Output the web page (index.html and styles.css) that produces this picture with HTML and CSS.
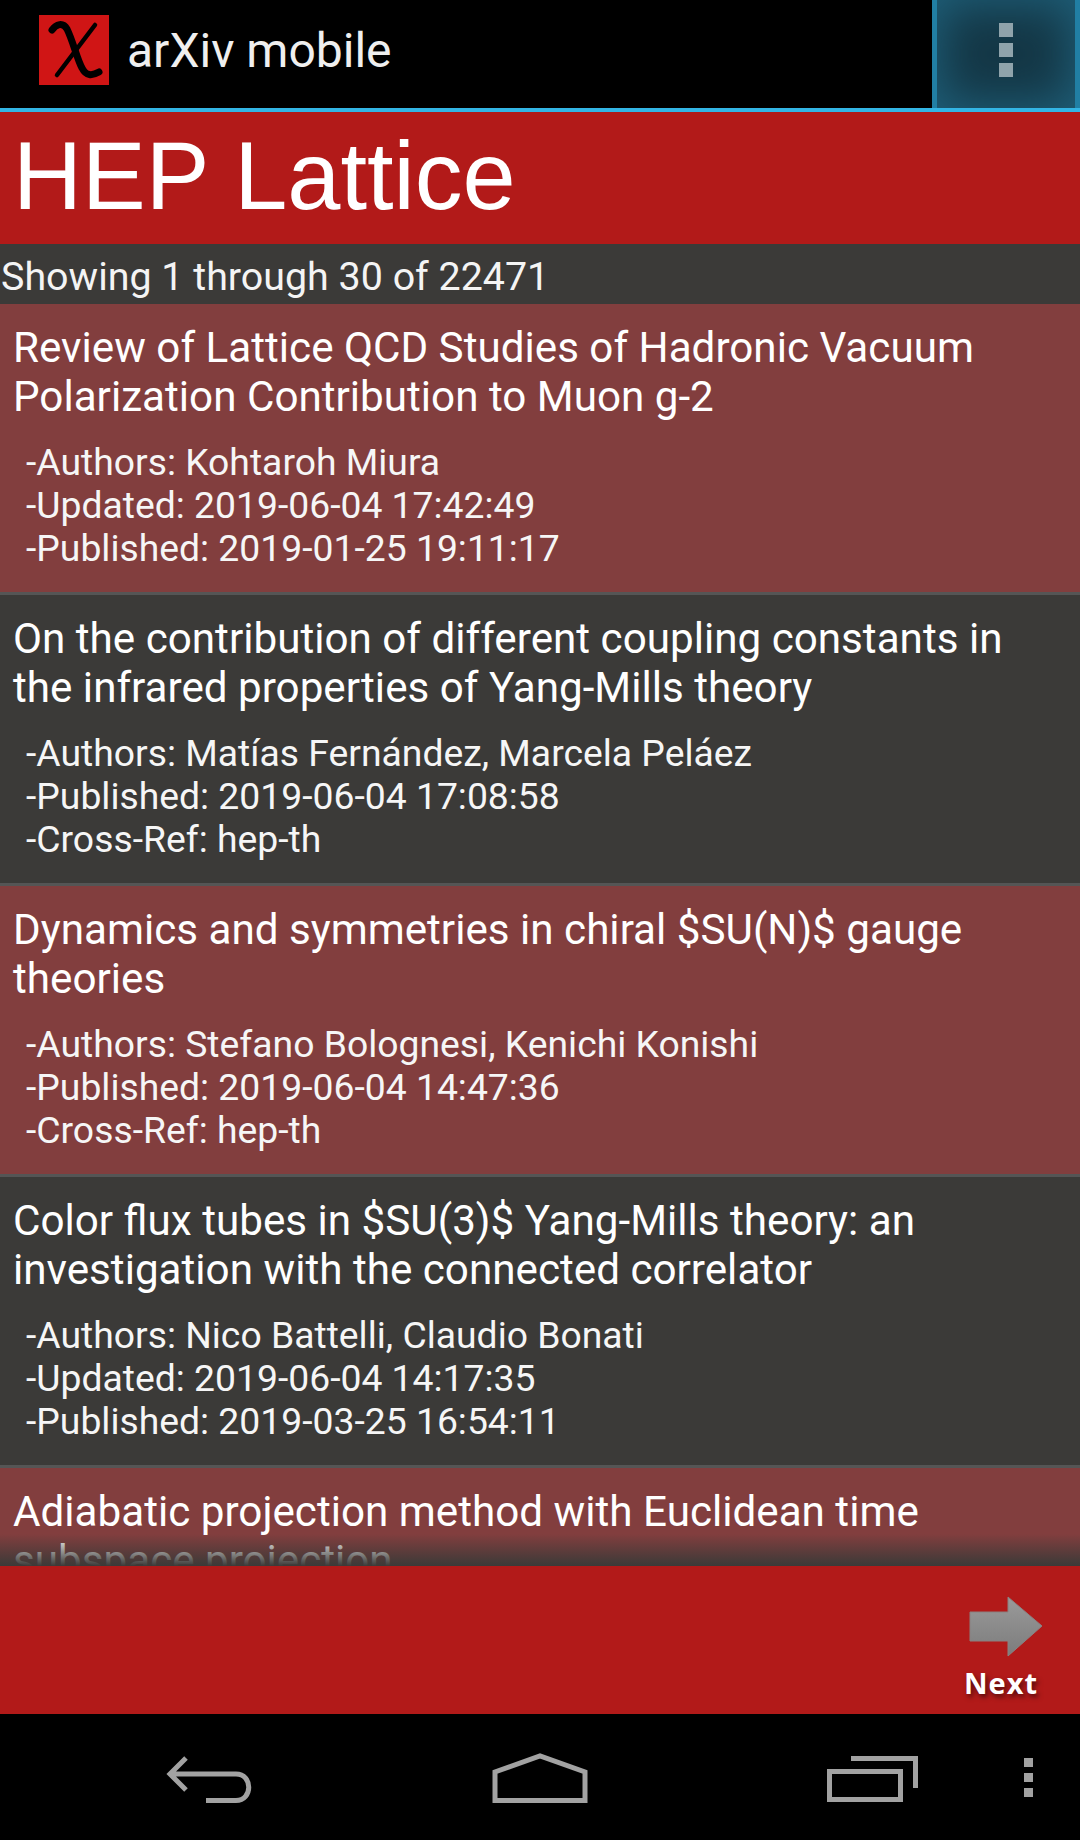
FILE: index.html
```html
<!DOCTYPE html>
<html lang="en">
<head>
<meta charset="utf-8">
<title>arXiv mobile</title>
<link rel="stylesheet" href="styles.css">
</head>
<body>
<div class="app">
  <header class="actionbar">
    <div class="brand">
      <svg class="logo" viewBox="0 0 70 70" aria-hidden="true">
        <rect width="70" height="70" fill="#d01515"/>
        <path class="chi-a" d="M13 15 C17 9 24 7 28 14 C34 26 38 44 43 53 C47 61 53 61 60 57"/>
        <path class="chi-b" d="M56 10 L18 60"/>
      </svg>
      <span class="apptitle">arXiv mobile</span>
    </div>
    <div class="overflow">
      <span class="dot"></span><span class="dot"></span><span class="dot"></span>
    </div>
  </header>
  <h1 class="category">HEP Lattice</h1>
  <div class="count">Showing 1 through 30 of 22471</div>
  <main class="list">
    <article class="item alt">
      <h2 class="item-title">Review of Lattice QCD Studies of Hadronic Vacuum Polarization Contribution to Muon g-2</h2>
      <p class="meta">-Authors: Kohtaroh Miura<br>-Updated: 2019-06-04 17:42:49<br>-Published: 2019-01-25 19:11:17</p>
    </article>
    <article class="item">
      <h2 class="item-title">On the contribution of different coupling constants in the infrared properties of Yang-Mills theory</h2>
      <p class="meta">-Authors: Matías Fernández, Marcela Peláez<br>-Published: 2019-06-04 17:08:58<br>-Cross-Ref: hep-th</p>
    </article>
    <article class="item alt">
      <h2 class="item-title">Dynamics and symmetries in chiral $SU(N)$ gauge theories</h2>
      <p class="meta">-Authors: Stefano Bolognesi, Kenichi Konishi<br>-Published: 2019-06-04 14:47:36<br>-Cross-Ref: hep-th</p>
    </article>
    <article class="item">
      <h2 class="item-title">Color flux tubes in $SU(3)$ Yang-Mills theory: an investigation with the connected correlator</h2>
      <p class="meta">-Authors: Nico Battelli, Claudio Bonati<br>-Updated: 2019-06-04 14:17:35<br>-Published: 2019-03-25 16:54:11</p>
    </article>
    <article class="item alt">
      <h2 class="item-title">Adiabatic projection method with Euclidean time subspace projection</h2>
    </article>
    <div class="fade"></div>
  </main>
  <footer class="pager">
    <div class="next">
      <svg class="next-arrow" viewBox="0 0 74 62" aria-hidden="true">
        <defs>
          <linearGradient id="arrowfill" x1="0" y1="0" x2="0" y2="1">
            <stop offset="0" stop-color="#9a9a9a"/>
            <stop offset="1" stop-color="#7c7c7c"/>
          </linearGradient>
        </defs>
        <path d="M1 16 H39 V1 L73 30 L39 60 V45 H1 Z" fill="url(#arrowfill)" stroke="#8a8080" stroke-width="1"/>
      </svg>
      <span class="next-label">Next</span>
    </div>
  </footer>
  <nav class="navbar">
    <svg class="nav-back" viewBox="0 0 90 48" aria-hidden="true">
      <path d="M20 3 L4 19 L20 35 M5 19 H70 C87 19 87 45.500 70 45.500 H40"/>
    </svg>
    <svg class="nav-home" viewBox="0 0 96 50" aria-hidden="true">
      <path d="M3 47.500 V19 L48 3 L93 19 V47.500 Z"/>
    </svg>
    <svg class="nav-recent" viewBox="0 0 92 46" aria-hidden="true">
      <path d="M24 2.500 H88.500 V32 M2.500 15.500 H73.500 V43.500 H2.500 Z" />
    </svg>
    <div class="nav-menu"><span></span><span></span><span></span></div>
  </nav>
</div>
</body>
</html>
```
FILE: styles.css
```css
* { box-sizing: border-box; }
html, body { margin: 0; padding: 0; background: #000; }
.app { width: 1080px; height: 1840px; display: flex; flex-direction: column; overflow: hidden; font-family: Roboto, "Liberation Sans", sans-serif; color: #fff; }

.actionbar { height: 112px; flex: none; background: #000; border-bottom: 4px solid #33b5e5; display: flex; justify-content: space-between; }
.brand { display: flex; align-items: center; padding-left: 39px; gap: 18px; }
.logo { width: 70px; height: 70px; display: block; margin-top: -8px; }
.chi-a { fill: none; stroke: #000; stroke-width: 7; stroke-linecap: round; }
.chi-b { fill: none; stroke: #000; stroke-width: 4.500; stroke-linecap: round; }
.apptitle { font-size: 48px; color: #efefef; margin-top: -8px; }
.overflow { width: 148px; background: #143746; box-shadow: inset 0 0 46px 4px #1f607a; border-left: 5px solid #217fa4; border-right: 5px solid #217fa4; display: flex; flex-direction: column; align-items: center; justify-content: center; gap: 6px; padding-bottom: 8px; margin-left: auto; }
.dot { width: 14px; height: 14px; background: #8fa3ab; display: block; }

.category { margin: 0; height: 132px; flex: none; background: #b21a19; font-family: "Liberation Sans", Arial, sans-serif; font-weight: 400; font-size: 95.500px; line-height: 128px; padding-left: 13px; }
.count { height: 60px; flex: none; background: #3b3a38; font-size: 39.400px; line-height: 60px; padding: 3px 0 0 1px; color: #f4f4f4; }

.list { flex: 1; min-height: 0; overflow: hidden; position: relative; background: #3b3a38; }
.item { height: 291px; padding: 19px 13px 0; border-bottom: 3px solid #555; background: #3b3a38; }
.item.alt { background: #823e3e; }
.item-title { margin: 0; font-weight: 400; font-size: 42.200px; line-height: 49px; color: #fff; padding-right: 50px; }
.meta { margin: 20px 0 0; padding-left: 13px; font-size: 37.300px; line-height: 43px; color: #f6f6f6; }
.fade { position: absolute; left: 0; right: 0; bottom: 0; height: 32px; background: linear-gradient(to bottom, rgba(59, 58, 56, 0), rgba(59, 58, 56, 1)); }

.pager { height: 148px; flex: none; background: #b21a19; position: relative; display: flex; justify-content: flex-end; }
.next { width: 100px; margin-right: 29px; display: flex; flex-direction: column; align-items: center; padding-top: 30px; }
.next-arrow { width: 74px; height: 62px; display: block; margin-left: 10px; }
.next-label { font-family: "Open Sans", "Liberation Sans", sans-serif; font-weight: 700; font-size: 29px; line-height: 38px; letter-spacing: 1px; margin-top: 6px; color: #fff; text-shadow: 2px 3px 5px rgba(0, 0, 0, 0.55); }

.navbar { height: 126px; flex: none; background: #000; position: relative; display: flex; align-items: center; padding-top: 4px; }
.navbar svg { display: block; flex: none; fill: none; stroke: #a2a2a2; stroke-width: 5; }
.nav-back { width: 90px; height: 48px; margin-left: 166px; }
.nav-home { width: 96px; height: 50px; margin-left: 236px; margin-top: -2px; }
.nav-recent { width: 92px; height: 46px; margin-left: 239px; }
.nav-menu { display: flex; flex-direction: column; gap: 6px; margin-left: 105px; margin-top: -4px; }
.nav-menu span { width: 9px; height: 9px; background: #a2a2a2; display: block; }
```
